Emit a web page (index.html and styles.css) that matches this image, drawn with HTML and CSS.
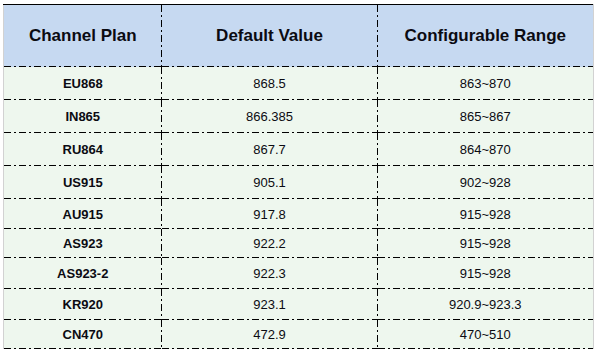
FILE: index.html
```html
<!DOCTYPE html>
<html>
<head>
<meta charset="utf-8">
<link rel="stylesheet" href="styles.css">
</head>
<body>
<table class="plan">
  <colgroup>
    <col class="c1"><col class="c2"><col class="c3">
  </colgroup>
  <thead>
    <tr class="head">
      <th>Channel Plan</th>
      <th>Default Value</th>
      <th>Configurable Range</th>
    </tr>
  </thead>
  <tbody>
    <tr class="h33"><td class="name">EU868</td><td>868.5</td><td>863~870</td></tr>
    <tr class="h33"><td class="name">IN865</td><td>866.385</td><td>865~867</td></tr>
    <tr class="h33"><td class="name">RU864</td><td>867.7</td><td>864~870</td></tr>
    <tr class="h33"><td class="name">US915</td><td>905.1</td><td>902~928</td></tr>
    <tr class="h30"><td class="name">AU915</td><td>917.8</td><td>915~928</td></tr>
    <tr class="h29"><td class="name">AS923</td><td>922.2</td><td>915~928</td></tr>
    <tr class="h31"><td class="name">AS923-2</td><td>922.3</td><td>915~928</td></tr>
    <tr class="h31"><td class="name">KR920</td><td>923.1</td><td>920.9~923.3</td></tr>
    <tr class="h29"><td class="name">CN470</td><td>472.9</td><td>470~510</td></tr>
  </tbody>
</table>
</body>
</html>
```
FILE: styles.css
```css
html, body {
  margin: 0;
  padding: 0;
  background: #ffffff;
}

body {
  padding: 4px 0 0 3px;
  font-family: "Liberation Sans", Arial, sans-serif;
  color: #0b0b12;
}

.plan {
  width: 591px;
  table-layout: fixed;
  border-collapse: collapse;
  border-spacing: 0;
  border-top: 1px solid #000;
  border-left: 1px solid #d2d2d2;
  border-right: 1px solid #d2d2d2;
}

.c1 { width: 158px; }
.c2 { width: 216px; }
.c3 { width: 216px; }

.plan th,
.plan td {
  padding: 0;
  text-align: center;
  vertical-align: middle;
  background-image:
    repeating-linear-gradient(to right, #000 0 7px, transparent 7px 10px, #000 10px 12px, transparent 12px 15px),
    repeating-linear-gradient(to bottom, #000 0 7px, transparent 7px 10px, #000 10px 12px, transparent 12px 15px);
  background-size: 100% 1px, 1px 100%;
  background-position: left bottom, right top;
  background-repeat: no-repeat;
}

.plan th:last-child,
.plan td:last-child {
  background-image:
    repeating-linear-gradient(to right, #000 0 7px, transparent 7px 10px, #000 10px 12px, transparent 12px 15px);
  background-size: 100% 1px;
  background-position: left bottom;
}

.head th {
  height: 62px;
  background-color: #c6d9f1;
  font-size: 17px;
  font-weight: bold;
}

.plan td {
  background-color: #eef7ee;
  font-size: 13px;
}

.plan td.name {
  font-weight: bold;
}

.h33 td { height: 33px; }
.h31 td { height: 31px; }
.h30 td { height: 30px; }
.h29 td { height: 29px; }
```
